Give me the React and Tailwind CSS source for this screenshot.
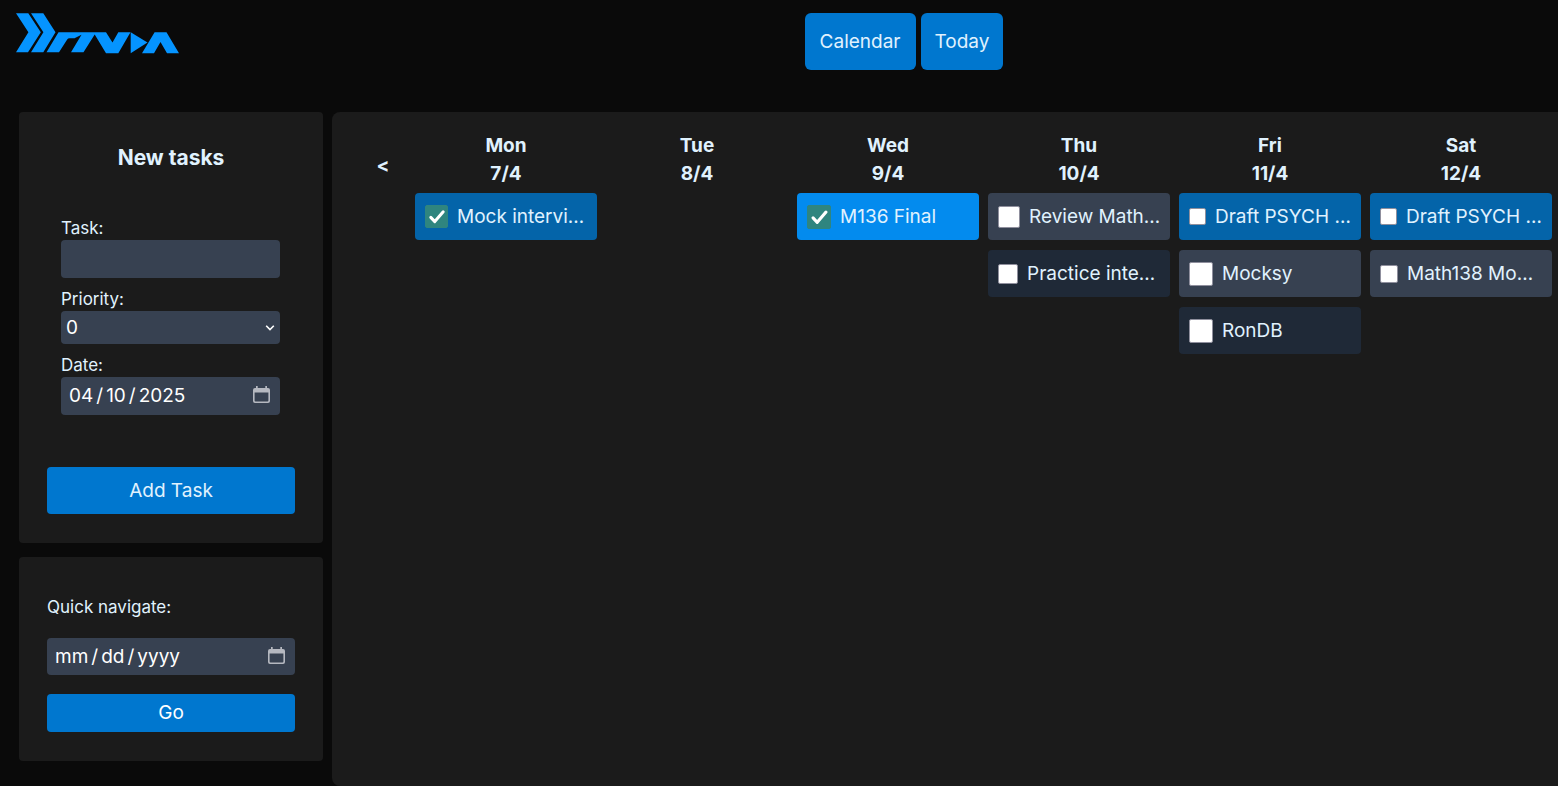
import React from "react";

const week = [
  {
    day: "Mon",
    date: "7/4",
    tasks: [{ id: "mock", title: "Mock intervi…", tone: "bg-[#0464a9]", box: "size-[23px]", done: true }],
  },
  { day: "Tue", date: "8/4", tasks: [] },
  {
    day: "Wed",
    date: "9/4",
    tasks: [{ id: "m136", title: "M136 Final", tone: "bg-[#038bee]", box: "size-6", done: true }],
  },
  {
    day: "Thu",
    date: "10/4",
    tasks: [
      { id: "review", title: "Review Math…", tone: "bg-[#374151]", box: "size-[22px]" },
      { id: "practice", title: "Practice inte…", tone: "bg-[#1f2937]", box: "size-5" },
    ],
  },
  {
    day: "Fri",
    date: "11/4",
    tasks: [
      { id: "psych-fri", title: "Draft PSYCH …", tone: "bg-[#0464a9]", box: "size-[17px]" },
      { id: "mocksy", title: "Mocksy", tone: "bg-[#374151]", box: "size-6" },
      { id: "rondb", title: "RonDB", tone: "bg-[#1f2937]", box: "size-6" },
    ],
  },
  {
    day: "Sat",
    date: "12/4",
    tasks: [
      { id: "psych-sat", title: "Draft PSYCH …", tone: "bg-[#0464a9]", box: "size-[17px]" },
      { id: "math138", title: "Math138 Mo…", tone: "bg-[#374151]", box: "size-[18px]" },
    ],
  },
];

function Logo() {
  return (
    <svg viewBox="0 0 164 42" className="h-[42px] w-[164px]" fill="#0594ff" aria-label="Logo" role="img">
      <path d="M0 1.3H12.3L24.8 20.3 12 40.3H0L12.4 20.3Z" />
      <path d="M15 1.3H27.3L39.5 20.3 27.3 40.3H15L27.4 20.3Z" />
      <path d="M30.5 40.3 42.5 20.2H90L96.5 30.5 102.3 20.2H114.5L102.3 41.2H90L78.7 22.5 67.5 40.3H55L65.5 22.8 58.5 26.2H53.5Q52 26.2 51.2 27.6L43 40.3Z" />
      <path d="M114.7 20.2 131.5 30.4 114.7 41.2Z" />
      <path d="M126 41.2 138.6 20.2H150.5L163 41.2H151L144.5 30 138 41.2Z" />
    </svg>
  );
}

function Task({ task }) {
  return (
    <label className={`flex h-[47px] items-center gap-[9px] rounded pr-[9px] pl-[10px] text-[#e0f2fe] ${task.tone}`}>
      <span className={`relative shrink-0 ${task.box}`}>
        <input
          type="checkbox"
          defaultChecked={task.done}
          className="peer block size-full appearance-none rounded-[2px] border border-[#8f8f9d] bg-white checked:border-[#2f857f] checked:bg-[#2f857f]"
        />
        <svg
          viewBox="0 0 23 23"
          className="pointer-events-none absolute inset-0 hidden size-full peer-checked:block"
          fill="none"
          stroke="white"
          strokeWidth="3"
          strokeLinecap="round"
          strokeLinejoin="round"
          aria-hidden="true"
        >
          <path d="M5.8 12.4 9.8 16.6 18.2 6.8" />
        </svg>
      </span>
      <span className="truncate">{task.title}</span>
    </label>
  );
}

function DateField({ height, inset, ...props }) {
  return (
    <div className="relative">
      <input
        type="date"
        className={`w-full rounded bg-[#374151] pr-2 pl-[7px] text-white scheme-dark [&::-webkit-calendar-picker-indicator]:opacity-0 [&::-webkit-datetime-edit-text]:px-[2px] ${height}`}
        {...props}
      />
      <svg
        viewBox="0 0 17 18"
        className="pointer-events-none absolute top-[9px] right-[10px] h-[18px] w-[17px]"
        fill="#b5b8c0"
        aria-hidden="true"
      >
        <path
          fillRule="evenodd"
          d="M3 0H4.7V2H12.3V0H14V2H15Q17 2 17 4V15Q17 17 15 17H2Q0 17 0 15V4Q0 2 2 2H3ZM1.6 6.6V14.6Q1.6 15.5 2.5 15.5H14.5Q15.4 15.5 15.4 14.6V6.6Z"
        />
      </svg>
    </div>
  );
}

export default function App() {
  return (
    <div className="flex min-h-screen flex-col overflow-hidden bg-[#0a0a0a] font-[Inter,sans-serif] text-[19px] leading-7 text-[#e0f2fe]">
      <header className="flex h-28 items-start">
        <div className="w-[250px] shrink-0 pt-3 pl-4">
          <Logo />
        </div>
        <nav className="flex flex-1 justify-center gap-[5px] pt-[13px]">
          <button type="button" className="h-[57px] rounded-md bg-[#0077cf] px-[15px]">Calendar</button>
          <button type="button" className="h-[57px] rounded-md bg-[#0077cf] px-[14px]">Today</button>
        </nav>
      </header>

      <main className="flex flex-1 gap-[9px] pl-[19px]">
        <aside className="flex w-[304px] shrink-0 flex-col gap-[14px]">
          <form className="rounded bg-[#1b1b1b] px-7 pt-8 pb-[29px]" onSubmit={(e) => e.preventDefault()}>
            <h2 className="text-center text-[21px] font-bold">New tasks</h2>
            <div className="mt-[45px] mb-[52px] flex flex-col pr-[15px] pl-[14px]">
              <label htmlFor="task" className="text-[17px] leading-[23px]">Task:</label>
              <input id="task" type="text" className="h-[38px] w-full rounded bg-[#374151] px-2 text-white" />
              <label htmlFor="priority" className="mt-[10px] text-[17px] leading-[23px]">Priority:</label>
              <div className="relative">
                <select id="priority" className="block h-[33px] w-full appearance-none rounded bg-[#374151] px-[5px] text-white">
                  <option>0</option>
                  <option>1</option>
                  <option>2</option>
                  <option>3</option>
                </select>
                <svg
                  viewBox="0 0 10 6"
                  className="pointer-events-none absolute top-[14px] right-[5px] h-[6px] w-[10px]"
                  fill="none"
                  stroke="white"
                  strokeWidth="1.6"
                  aria-hidden="true"
                >
                  <path d="M1.2 0.8 5 4.6 8.8 0.8" />
                </svg>
              </div>
              <label htmlFor="date" className="mt-[10px] text-[17px] leading-[23px]">Date:</label>
              <DateField id="date" defaultValue="2025-04-10" height="h-[38px]" />
            </div>
            <button type="submit" className="h-[47px] w-full rounded bg-[#0077cf]">Add Task</button>
          </form>

          <form className="rounded bg-[#1b1b1b] px-7 pt-[38px] pb-[29px]" onSubmit={(e) => e.preventDefault()}>
            <label htmlFor="navigate" className="mb-[19px] block text-[17px] leading-6">Quick navigate:</label>
            <DateField id="navigate" height="h-[37px]" />
            <button type="submit" className="mt-[19px] h-[38px] w-full rounded bg-[#0077cf] text-white">Go</button>
          </form>
        </aside>

        <section className="flex flex-1 items-start gap-[9px] rounded-l-lg bg-[#1b1b1b] pt-5 pr-[6px] pl-7">
          <button type="button" aria-label="Previous week" className="mt-5 w-[46px] shrink-0 font-bold">&lt;</button>
          <div className="grid flex-1 grid-cols-6 gap-[9px]">
            {week.map((col) => (
              <div key={col.day} className="flex min-w-0 flex-col gap-[10px]">
                <h3 className="-mb-[5px] text-center font-bold">
                  {col.day}
                  <br />
                  {col.date}
                </h3>
                {col.tasks.map((t) => (
                  <Task key={t.id} task={t} />
                ))}
              </div>
            ))}
          </div>
        </section>
      </main>
    </div>
  );
}
